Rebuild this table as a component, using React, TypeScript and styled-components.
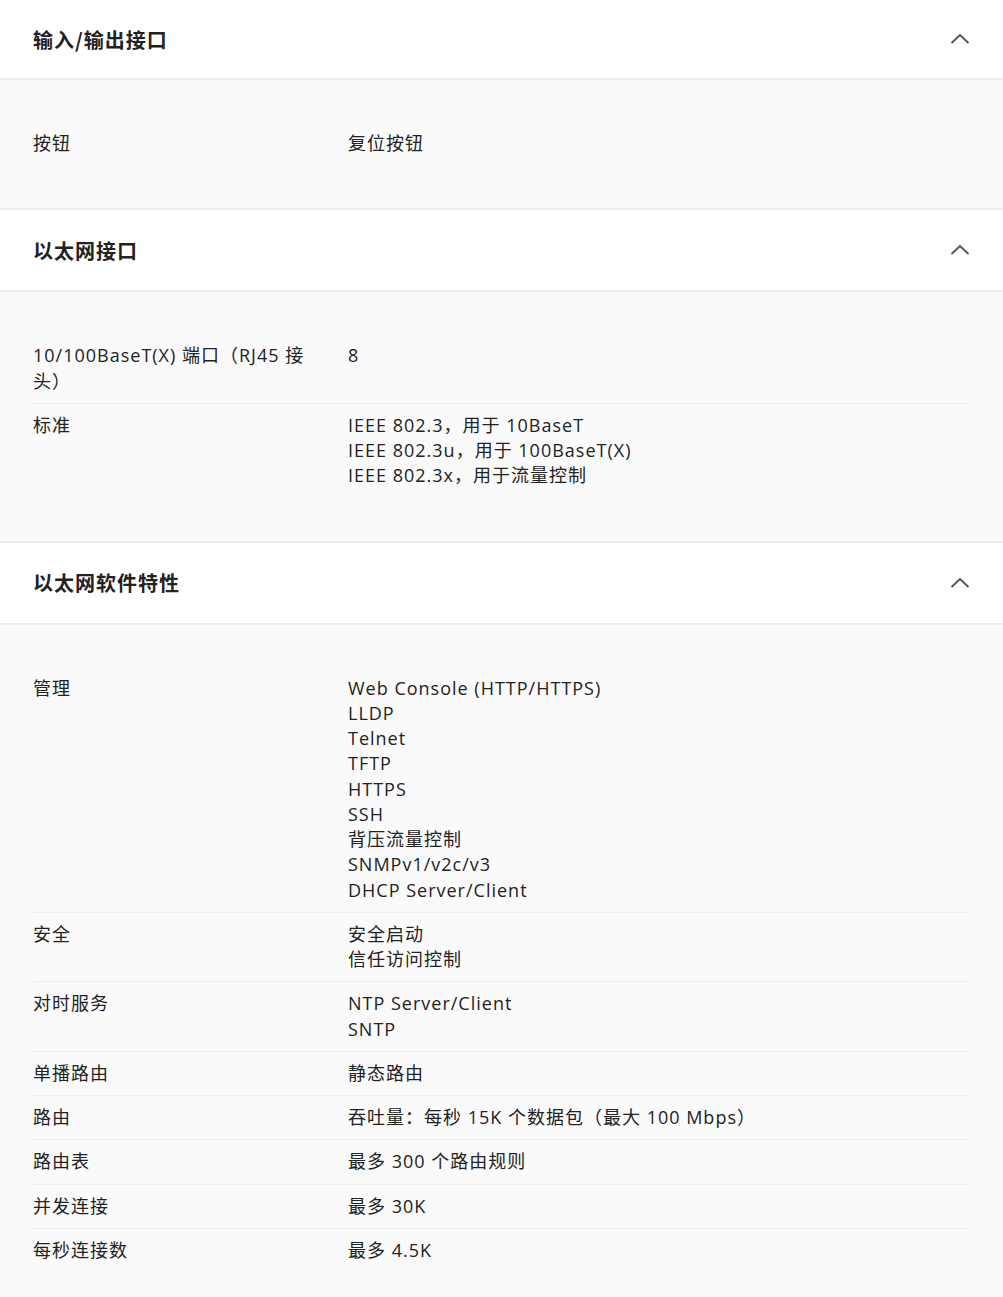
import React from 'react'
import styled, { createGlobalStyle } from 'styled-components'

type Row = { label: string; values: string[] }
type Section = { title: string; rows: Row[] }

const sections: Section[] = [
  {
    title: '输入/输出接口',
    rows: [{ label: '按钮', values: ['复位按钮'] }],
  },
  {
    title: '以太网接口',
    rows: [
      { label: '10/100BaseT(X) 端口（RJ45 接头）', values: ['8'] },
      {
        label: '标准',
        values: [
          'IEEE 802.3，用于 10BaseT',
          'IEEE 802.3u，用于 100BaseT(X)',
          'IEEE 802.3x，用于流量控制',
        ],
      },
    ],
  },
  {
    title: '以太网软件特性',
    rows: [
      {
        label: '管理',
        values: [
          'Web Console (HTTP/HTTPS)',
          'LLDP',
          'Telnet',
          'TFTP',
          'HTTPS',
          'SSH',
          '背压流量控制',
          'SNMPv1/v2c/v3',
          'DHCP Server/Client',
        ],
      },
      { label: '安全', values: ['安全启动', '信任访问控制'] },
      { label: '对时服务', values: ['NTP Server/Client', 'SNTP'] },
      { label: '单播路由', values: ['静态路由'] },
      { label: '路由', values: ['吞吐量：每秒 15K 个数据包（最大 100 Mbps）'] },
      { label: '路由表', values: ['最多 300 个路由规则'] },
      { label: '并发连接', values: ['最多 30K'] },
      { label: '每秒连接数', values: ['最多 4.5K'] },
    ],
  },
]

const GlobalStyle = createGlobalStyle`
  html, body {
    margin: 0;
    padding: 0;
    background: #fafafa;
  }
  body {
    font-family: "Open Sans", "Noto Sans CJK SC", sans-serif;
    color: #222;
    letter-spacing: 1px;
  }
`

const Page = styled.div`
  display: flex;
  flex-direction: column;
`

const Block = styled.section`
  display: flex;
  flex-direction: column;
  border-bottom: 2px solid #ececec;
  &:last-child { border-bottom: none; }
`

const Header = styled.div<{ $first?: boolean }>`
  height: ${p => (p.$first ? 78 : 80)}px;
  display: flex;
  align-items: center;
  justify-content: space-between;
  padding: 0 33px;
  background: #fff;
  border-bottom: 2px solid #ececec;
`

const Title = styled.h2`
  margin: 0;
  font-size: 20px;
  font-weight: 700;
  color: #222;
  font-family: "Noto Sans CJK SC", sans-serif;
`

const Chevron = styled.svg`
  width: 20px;
  height: 12px;
`

const Body = styled.div`
  background: #fafafa;
  padding: 42px 35px 43px 33px;
`

const SpecRow = styled.div`
  display: grid;
  grid-template-columns: 315px 1fr;
  padding: 9px 0;
  font-size: 18px;
  line-height: 25.25px;
  border-top: 1px solid #ececec;
  &:first-child { border-top: none; }
`

const Label = styled.div`
  padding-right: 20px;
  color: #222;
`

const Values = styled.div`
  display: flex;
  flex-direction: column;
  color: #222;
`

const UpIcon = () => (
  <Chevron viewBox="0 0 20 12" fill="none">
    <path d="M1.5 10L10 2l8.5 8" stroke="#555" strokeWidth="2" />
  </Chevron>
)

export default function App() {
  return (
    <Page>
      <GlobalStyle />
      {sections.map((s, i) => (
        <Block key={s.title}>
          <Header $first={i === 0}>
            <Title>{s.title}</Title>
            <UpIcon />
          </Header>
          <Body>
            {s.rows.map(r => (
              <SpecRow key={r.label}>
                <Label>{r.label}</Label>
                <Values>
                  {r.values.map(v => <span key={v}>{v}</span>)}
                </Values>
              </SpecRow>
            ))}
          </Body>
        </Block>
      ))}
    </Page>
  )
}
